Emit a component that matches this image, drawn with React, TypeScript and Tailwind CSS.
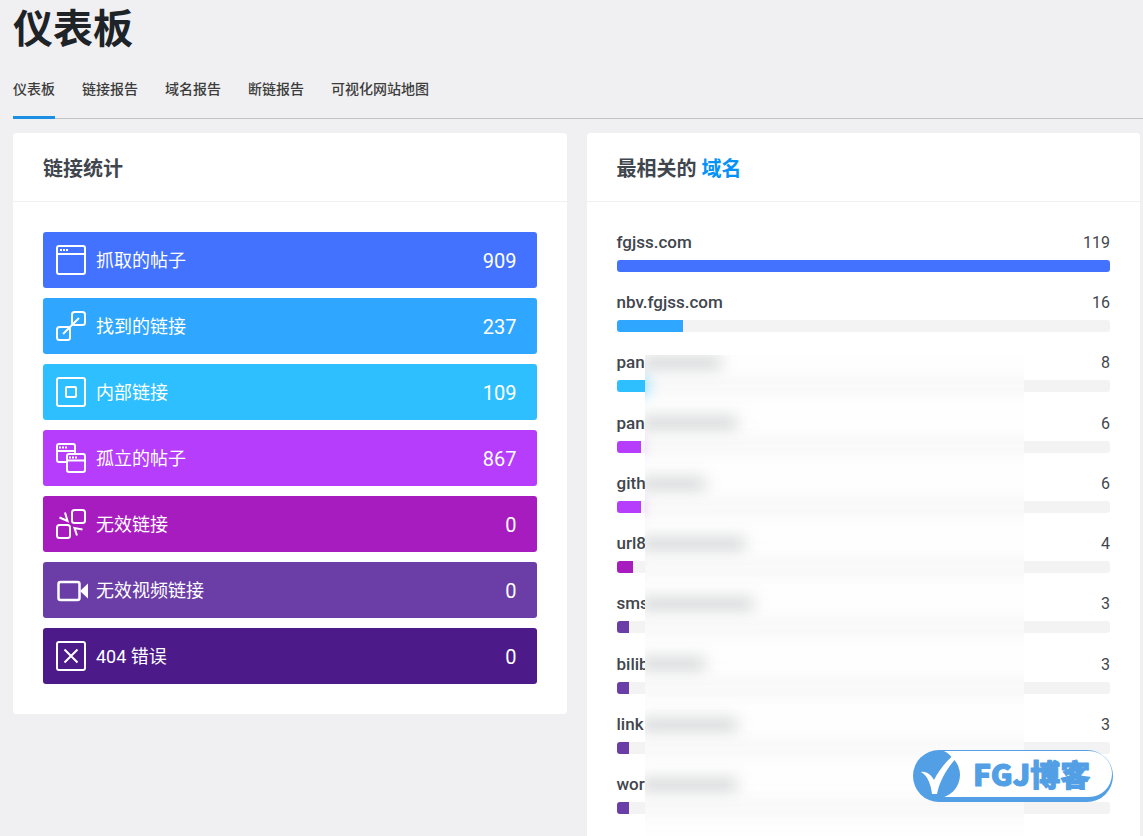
import React from "react";

interface Stat {
  label: string;
  value: number;
  color: string;
  icon: React.ReactNode;
}

interface Domain {
  name: string;
  count: number;
  color: string;
  // width of the smudge that stands for the rest of the name
  hidden?: string;
}

const tabs = ["仪表板", "链接报告", "域名报告", "断链报告", "可视化网站地图"];

const Icon: React.FC<{ children: React.ReactNode }> = ({ children }) => (
  <svg
    viewBox="0 0 30 30"
    className="w-[30px] h-[30px] shrink-0 overflow-visible"
    fill="none"
    stroke="currentColor"
    strokeWidth="2"
    aria-hidden="true"
  >
    {children}
  </svg>
);

const stats: Stat[] = [
  {
    label: "抓取的帖子",
    value: 909,
    color: "bg-[#4272ff]",
    icon: (
      <Icon>
        <rect x="1" y="1" width="28" height="28" rx="2" />
        <path d="M1 9h28M4 5h2M7 5h2M10 5h2" />
      </Icon>
    ),
  },
  {
    label: "找到的链接",
    value: 237,
    color: "bg-[#2fa6ff]",
    icon: (
      <Icon>
        <rect x="16" y="1" width="13" height="13" rx="2.500" />
        <rect x="1" y="16" width="13" height="13" rx="2.500" />
        <path d="M7 23L23 7" />
      </Icon>
    ),
  },
  {
    label: "内部链接",
    value: 109,
    color: "bg-[#2dbfff]",
    icon: (
      <Icon>
        <rect x="1" y="1" width="28" height="28" rx="2" />
        <rect x="10" y="10" width="10" height="10" rx="1" />
      </Icon>
    ),
  },
  {
    label: "孤立的帖子",
    value: 867,
    color: "bg-[#b53dfb]",
    icon: (
      <Icon>
        <path d="M10 19H3a2 2 0 0 1-2-2V3a2 2 0 0 1 2-2h14a2 2 0 0 1 2 2v7M1 8h18" />
        <path d="M3 4.500h2M6 4.500h2M9 4.500h2M13 14.500h2M16 14.500h2M19 14.500h2" />
        <rect x="11" y="11" width="18" height="18" rx="2" />
        <path d="M11 17.500h18" />
      </Icon>
    ),
  },
  {
    label: "无效链接",
    value: 0,
    color: "bg-[#a71cbe]",
    icon: (
      <Icon>
        <rect x="16" y="1" width="13" height="13" rx="2.500" />
        <rect x="1" y="16" width="13" height="13" rx="2.500" />
        <path d="M3.500 8.500l8 3.500L9 3.500M26.500 20.500l-8-1.500 2.500 7.500" />
      </Icon>
    ),
  },
  {
    label: "无效视频链接",
    value: 0,
    color: "bg-[#6b3da6]",
    icon: (
      <Icon>
        <rect x="2.500" y="7" width="21" height="18" rx="2" strokeWidth="2.500" />
        <path d="M24 16l8-7.500v15z" fill="currentColor" stroke="none" />
      </Icon>
    ),
  },
  {
    label: "404 错误",
    value: 0,
    color: "bg-[#4c1a89]",
    icon: (
      <Icon>
        <rect x="1" y="1" width="28" height="28" rx="2" />
        <path d="M8.500 8.500l13 13M21.500 8.500l-13 13" />
      </Icon>
    ),
  },
];

const domains: Domain[] = [
  { name: "fgjss.com", count: 119, color: "bg-[#4272ff]" },
  { name: "nbv.fgjss.com", count: 16, color: "bg-[#2fa6ff]" },
  { name: "pan", count: 8, color: "bg-[#2dbfff]", hidden: "w-20" },
  { name: "pan", count: 6, color: "bg-[#b53dfb]", hidden: "w-24" },
  { name: "gith", count: 6, color: "bg-[#b53dfb]", hidden: "w-16" },
  { name: "url8", count: 4, color: "bg-[#a71cbe]", hidden: "w-26" },
  { name: "sms", count: 3, color: "bg-[#6b3da6]", hidden: "w-28" },
  { name: "bilib", count: 3, color: "bg-[#6b3da6]", hidden: "w-16" },
  { name: "link", count: 3, color: "bg-[#6b3da6]", hidden: "w-24" },
  { name: "wor", count: 3, color: "bg-[#6b3da6]", hidden: "w-24" },
];

const maxCount = domains[0].count;

const Card: React.FC<{ title: React.ReactNode; children: React.ReactNode }> = ({ title, children }) => (
  <section className="bg-white rounded-sm">
    <h2 className="px-[30px] pt-[22px] pb-[18px] text-xl leading-7 font-bold text-[#3f464d] border-b border-[#f0f0f1]">
      {title}
    </h2>
    <div className="p-[30px]">{children}</div>
  </section>
);

// Frosted cover over the private part of the domain names
const Cover: React.FC = () => (
  <div
    className="absolute left-7 right-[86px] top-[123px] -bottom-[30px] bg-[#fefefe] overflow-hidden"
    aria-hidden="true"
  >
    <div className="flex flex-col justify-between h-[462px] -mt-[3px] -mx-7">
      {domains
        .filter((domain) => domain.hidden)
        .map((domain, index) => (
          <div key={index}>
            <div className="flex items-center h-5 pl-6">
              <div className={`mt-0.5 h-3 bg-[#3f464d]/25 blur-[8px] ${domain.hidden}`} />
            </div>
            <div className="mt-2 h-3 bg-[#f5f5f5] blur-[8px]">
              {/* the rows hang 28px outside the cover, so each fill starts where the real one does */}
              <div
                className={`h-full ${domain.color}`}
                style={{ width: `${(domain.count / maxCount) * 100}%` }}
              />
            </div>
          </div>
        ))}
    </div>
  </div>
);

const Watermark: React.FC = () => (
  <div className="absolute right-[30px] bottom-[34px] w-[200px] h-[52px]">
    <svg viewBox="0 0 200 52" className="w-full h-full" role="img" aria-label="FGJ博客">
      <rect width="200" height="52" rx="26" fill="#529fe5" />
      <path d="M31 1H176A23 23 0 0 1 176 47H31A26 26 0 0 0 31 1Z" fill="#fff" />
      <circle cx="24" cy="25" r="23" fill="#529fe5" />
      <path
        d="M8 22c6-1 10 3 13 8C26 20 34 10 43 3l2 3C35 17 27 29 24 44h-5C18 35 15 26 8 22z"
        fill="#fff"
      />
      <text
        x="60"
        y="36"
        fill="#529fe5"
        stroke="#529fe5"
        strokeWidth="1"
        strokeLinejoin="round"
        className="text-[30px] font-black font-['Noto_Sans_CJK_SC',sans-serif]"
      >
        FGJ博客
      </text>
    </svg>
  </div>
);

const App: React.FC = () => {
  return (
    <main className="relative h-screen overflow-hidden bg-[#f0f0f2] pl-[13px] text-[#3f464d] font-[Roboto,'Noto_Sans_CJK_SC',sans-serif]">
      <h1 className="pt-0.5 text-[40px] leading-[56px] font-bold text-[#1d2327]">仪表板</h1>
      <nav className="flex gap-[27px] pt-[21px] border-b border-[#c3c4c7]">
        {tabs.map((tab, index) => (
          <a
            key={tab}
            href="#"
            className={`-mb-px pb-[17px] text-sm leading-5 font-medium text-[#3c3c3c] border-b-3 ${
              index === 0 ? "border-[#1a8fe3]" : "border-transparent"
            }`}
          >
            {tab}
          </a>
        ))}
      </nav>

      <div className="grid grid-cols-2 items-start gap-5 mt-[14px] pr-[3px]">
        <Card title="链接统计">
          <ul className="flex flex-col gap-[10px]">
            {stats.map((stat) => (
              <li
                key={stat.label}
                className={`flex items-center gap-[10px] h-14 pl-[13px] pr-5 rounded-[3px] text-white ${stat.color}`}
              >
                {stat.icon}
                <span className="pt-0.5 text-lg">{stat.label}</span>
                <span className="ml-auto pt-0.5 text-xl">{stat.value}</span>
              </li>
            ))}
          </ul>
        </Card>

        <Card
          title={
            <>
              最相关的 <a href="#" className="text-[#0693f8]">域名</a>
            </>
          }
        >
          <div className="relative">
            <ul className="flex flex-col justify-between h-[582px]">
              {domains.map((domain, index) => (
                <li key={index}>
                  <div className="flex items-baseline justify-between">
                    <span className="text-[17px] leading-5 font-medium">{domain.name}</span>
                    <span className="text-base leading-5">{domain.count}</span>
                  </div>
                  <div className="mt-[7px] h-3 rounded-[3px] bg-[#f3f3f3] overflow-hidden">
                    <div
                      className={`h-full ${domain.color}`}
                      style={{ width: `${(domain.count / maxCount) * 100}%` }}
                    />
                  </div>
                </li>
              ))}
            </ul>
            <Cover />
          </div>
        </Card>
      </div>
      <Watermark />
    </main>
  );
};

export default App;
